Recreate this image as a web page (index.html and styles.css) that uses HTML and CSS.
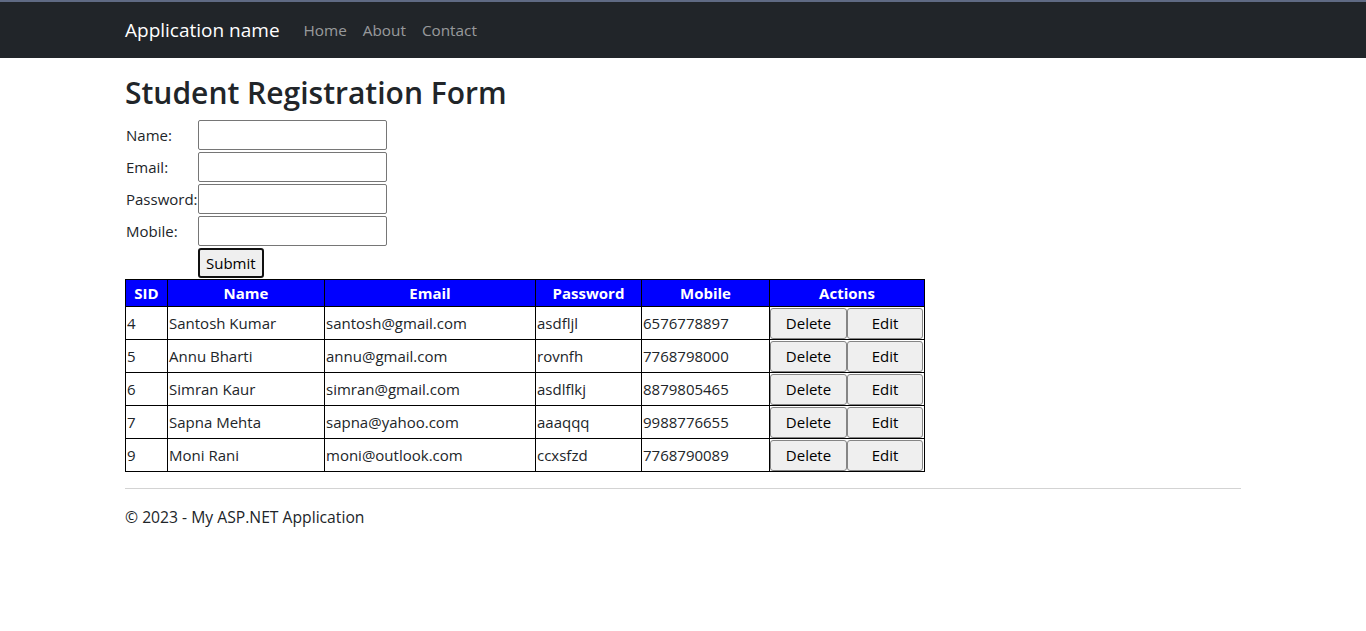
FILE: index.html
```html
<!DOCTYPE html>
<html lang="en">
<head>
<meta charset="utf-8">
<title>Student Registration Form</title>
<link rel="stylesheet" href="styles.css">
</head>
<body>
<nav class="navbar">
  <div class="container nav-inner">
    <a class="brand" href="#">Application name</a>
    <ul class="nav-links">
      <li><a href="#">Home</a></li>
      <li><a href="#">About</a></li>
      <li><a href="#">Contact</a></li>
    </ul>
  </div>
</nav>
<main class="container body-content">
  <h2 class="title">Student Registration Form</h2>
  <form class="reg-form">
    <label class="lbl">Name:</label><input class="field" type="text">
    <label class="lbl">Email:</label><input class="field" type="text">
    <label class="lbl">Password:</label><input class="field" type="password">
    <label class="lbl">Mobile:</label><input class="field" type="text">
    <span></span><button class="submit" type="button">Submit</button>
  </form>
  <table class="grid">
    <colgroup>
      <col class="c-sid"><col class="c-name"><col class="c-email"><col class="c-pass"><col class="c-mob"><col class="c-act">
    </colgroup>
    <thead>
      <tr><th>SID</th><th>Name</th><th>Email</th><th>Password</th><th>Mobile</th><th>Actions</th></tr>
    </thead>
    <tbody>
      <tr><td>4</td><td>Santosh Kumar</td><td>santosh@gmail.com</td><td>asdfljl</td><td>6576778897</td><td class="act"><button class="btn">Delete</button><button class="btn">Edit</button></td></tr>
      <tr><td>5</td><td>Annu Bharti</td><td>annu@gmail.com</td><td>rovnfh</td><td>7768798000</td><td class="act"><button class="btn">Delete</button><button class="btn">Edit</button></td></tr>
      <tr><td>6</td><td>Simran Kaur</td><td>simran@gmail.com</td><td>asdlflkj</td><td>8879805465</td><td class="act"><button class="btn">Delete</button><button class="btn">Edit</button></td></tr>
      <tr><td>7</td><td>Sapna Mehta</td><td>sapna@yahoo.com</td><td>aaaqqq</td><td>9988776655</td><td class="act"><button class="btn">Delete</button><button class="btn">Edit</button></td></tr>
      <tr><td>9</td><td>Moni Rani</td><td>moni@outlook.com</td><td>ccxsfzd</td><td>7768790089</td><td class="act"><button class="btn">Delete</button><button class="btn">Edit</button></td></tr>
    </tbody>
  </table>
  <hr class="rule">
  <footer class="footer">
    <p>&copy; 2023 - My ASP.NET Application</p>
  </footer>
</main>
</body>
</html>
```

FILE: styles.css
```css
* { box-sizing: border-box; }

html, body {
  margin: 0;
  padding: 0;
}

body {
  font-family: "Open Sans", "Noto Sans", sans-serif;
  font-size: 15px;
  line-height: 1.5;
  color: #212529;
  background: #fff;
}

.container {
  width: 1140px;
  margin: 0 auto;
  padding: 0 12px;
}

.navbar {
  background: #212529;
  border-top: 2px solid #5f6a83;
  height: 58px;
}

.nav-inner {
  display: flex;
  align-items: center;
  height: 56px;
}

.brand {
  color: #fff;
  text-decoration: none;
  font-size: 19px;
  margin-right: 24px;
}

.nav-links {
  display: flex;
  list-style: none;
  margin: 0;
  padding: 0;
  gap: 16px;
}

.nav-links a {
  color: rgba(255, 255, 255, 0.55);
  text-decoration: none;
  font-size: 15.3px;
}

.body-content {
  padding-top: 17px;
}

.title {
  font-size: 30px;
  font-weight: 600;
  line-height: 1.2;
  margin: 0 0 7px;
  height: 38px;
}

.reg-form {
  display: grid;
  grid-template-columns: 73px 189px;
  grid-auto-rows: 30px;
  row-gap: 2px;
  align-items: center;
  margin-top: 2px;
  margin-bottom: 1px;
}

.lbl {
  padding-left: 1px;
}

.field {
  height: 30px;
  width: 189px;
  border: 1px solid #767676;
  border-radius: 2px;
  font: inherit;
}

.submit {
  justify-self: start;
  height: 30px;
  padding: 0 6px;
  font: inherit;
  color: #000;
  background: #efefef;
  border: 2px solid #101010;
  border-radius: 3px;
}

.grid {
  border-collapse: collapse;
  table-layout: fixed;
  width: 799px;
}

.c-sid { width: 42px; }
.c-name { width: 157px; }
.c-email { width: 211px; }
.c-pass { width: 106px; }
.c-mob { width: 128px; }
.c-act { width: 155px; }

.grid th,
.grid td {
  border: 1px solid #000;
  padding: 0 1px;
  white-space: nowrap;
}

.grid th {
  background: #0000ff;
  color: #fff;
  font-weight: 700;
  text-align: center;
  height: 27px;
}

.grid td {
  height: 33px;
}

.grid td.act {
  padding: 0;
}

.btn {
  width: 77px;
  height: 31px;
  font: inherit;
  color: #000;
  background: #efefef;
  border: 1px solid #858585;
  border-radius: 3px;
  margin: 0;
  padding: 0;
  vertical-align: middle;
}

.btn + .btn {
  width: 76px;
}

.rule {
  border: 0;
  border-top: 1px solid #d3d3d3;
  margin: 16px 0 0;
}

.footer p {
  margin: 16px 0;
  line-height: 24px;
  font-size: 15.7px;
}
```
